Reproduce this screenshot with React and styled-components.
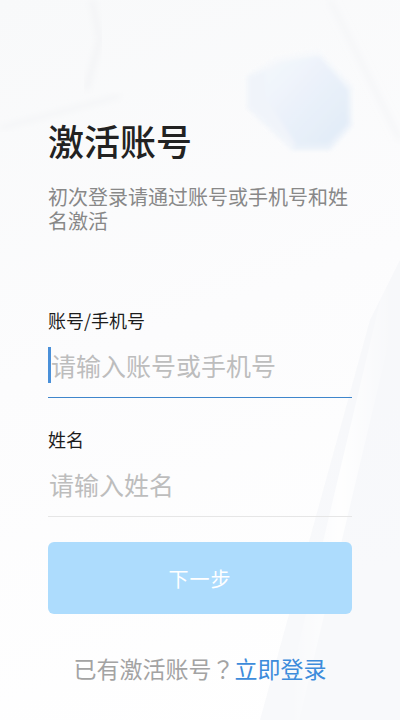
import React from "react";
import styled, { createGlobalStyle } from "styled-components";

const GlobalStyle = createGlobalStyle`
    html, body {
        margin: 0;
        padding: 0;
        background: #fafbfc;
    }
    * {
        box-sizing: border-box;
    }
`;

const Page = styled.div`
    position: relative;
    width: 400px;
    height: 720px;
    overflow: hidden;
    background: linear-gradient(160deg, #f8f9fa 0%, #fcfcfd 45%, #ffffff 100%);
    font-family: "Noto Sans CJK SC", "Noto Sans", sans-serif;
`;

const Backdrop = styled.svg`
    position: absolute;
    inset: 0;
    pointer-events: none;
`;

const Content = styled.div`
    position: relative;
    display: flex;
    flex-direction: column;
    padding: 113px 48px 0;
`;

const Title = styled.h1`
    margin: 0;
    font-size: 36px;
    line-height: 54px;
    font-weight: 500;
    color: #222;
`;

const Subtitle = styled.p`
    margin: 18px 0 0;
    font-size: 20px;
    line-height: 24px;
    color: #888;
`;

const Form = styled.div`
    display: flex;
    flex-direction: column;
    margin-top: 74px;
`;

const Field = styled.div`
    display: flex;
    flex-direction: column;
    margin-bottom: ${(p) => p.$gap || 0}px;
`;

const Label = styled.label`
    font-size: 18px;
    line-height: 26px;
    color: #1c1c1c;
`;

const InputRow = styled.div`
    position: relative;
    display: flex;
    align-items: center;
    height: 65px;
    border-bottom: 1px solid ${(p) => (p.$active ? "#3f86cc" : "#e6e6e6")};
`;

const Caret = styled.span`
    position: absolute;
    left: 0;
    top: 14px;
    width: 3px;
    height: 36px;
    background: #4a90d9;
`;

const Input = styled.input`
    flex: 1;
    border: none;
    outline: none;
    background: transparent;
    padding: 0 0 0 ${(p) => (p.$active ? 3 : 1)}px;
    font-family: inherit;
    font-size: 25px;
    color: #222;

    &::placeholder {
        color: #bdbdbd;
    }
`;

const NextButton = styled.button`
    margin-top: 25px;
    height: 72px;
    border: none;
    border-radius: 6px;
    background: #addcfd;
    color: #ffffff;
    font-family: inherit;
    font-size: 20px;
    letter-spacing: 1px;
`;

const Footer = styled.div`
    margin-top: 38px;
    text-align: center;
    font-size: 23px;
    line-height: 32px;
    color: #a3a3a3;
`;

const Punct = styled.span`
    font-family: "Noto Sans CJK TC", "Noto Sans CJK SC", sans-serif;
`;

const Link = styled.a`
    color: #3d8cdb;
    text-decoration: none;
`;

const Decoration = () => (
    <Backdrop width="400" height="720" viewBox="0 0 400 720">
        <defs>
            <linearGradient id="hexFace" x1="0" y1="0" x2="1" y2="1">
                <stop offset="0" stopColor="#f5f8fc" />
                <stop offset="1" stopColor="#dde9f7" />
            </linearGradient>
            <linearGradient id="hexSide" x1="0" y1="0" x2="0" y2="1">
                <stop offset="0" stopColor="#f7f9fc" />
                <stop offset="1" stopColor="#e8f0f9" />
            </linearGradient>
            <linearGradient id="streak" x1="0" y1="0" x2="1" y2="0">
                <stop offset="0" stopColor="#ffffff" stopOpacity="0" />
                <stop offset="0.5" stopColor="#ffffff" stopOpacity="0.9" />
                <stop offset="1" stopColor="#ffffff" stopOpacity="0" />
            </linearGradient>
            <filter id="soft">
                <feGaussianBlur stdDeviation="2" />
            </filter>
            <filter id="haze">
                <feGaussianBlur stdDeviation="3" />
            </filter>
        </defs>
        <path d="M92 0 L100 40 L86 90" stroke="#f2f3f5" strokeWidth="5" fill="none" filter="url(#haze)" />
        <path d="M0 128 L120 96" stroke="#f3f4f6" strokeWidth="4" fill="none" filter="url(#haze)" />
        <path d="M330 0 L400 140" stroke="#f4f5f7" strokeWidth="4" fill="none" filter="url(#haze)" />
        <path d="M370 320 L400 260 L400 720 L260 720 Z" fill="#f4f5f8" opacity="0.6" />
        <path d="M392 290 L290 720" stroke="url(#streak)" strokeWidth="18" fill="none" />
        <g filter="url(#soft)" opacity="0.9">
            <polygon points="276,58 318,50 352,86 352,126 330,150 292,150 247,108 247,76" fill="url(#hexSide)" />
            <polygon points="282,62 320,56 348,90 348,124 328,144 296,144 266,100 266,70" fill="url(#hexFace)" />
            <polygon points="247,76 266,70 266,100 296,144 292,150 247,108" fill="#f0f4fa" />
        </g>
    </Backdrop>
);

const App = () => (
    <>
        <GlobalStyle />
        <Page>
            <Decoration />
            <Content>
                <Title>激活账号</Title>
                <Subtitle>初次登录请通过账号或手机号和姓名激活</Subtitle>
                <Form>
                    <Field $gap={28}>
                        <Label>账号/手机号</Label>
                        <InputRow $active>
                            <Caret />
                            <Input $active placeholder="请输入账号或手机号" />
                        </InputRow>
                    </Field>
                    <Field>
                        <Label>姓名</Label>
                        <InputRow>
                            <Input placeholder="请输入姓名" />
                        </InputRow>
                    </Field>
                    <NextButton>下一步</NextButton>
                </Form>
                <Footer>
                    已有激活账号<Punct>？</Punct><Link href="#">立即登录</Link>
                </Footer>
            </Content>
        </Page>
    </>
);

export default App;
